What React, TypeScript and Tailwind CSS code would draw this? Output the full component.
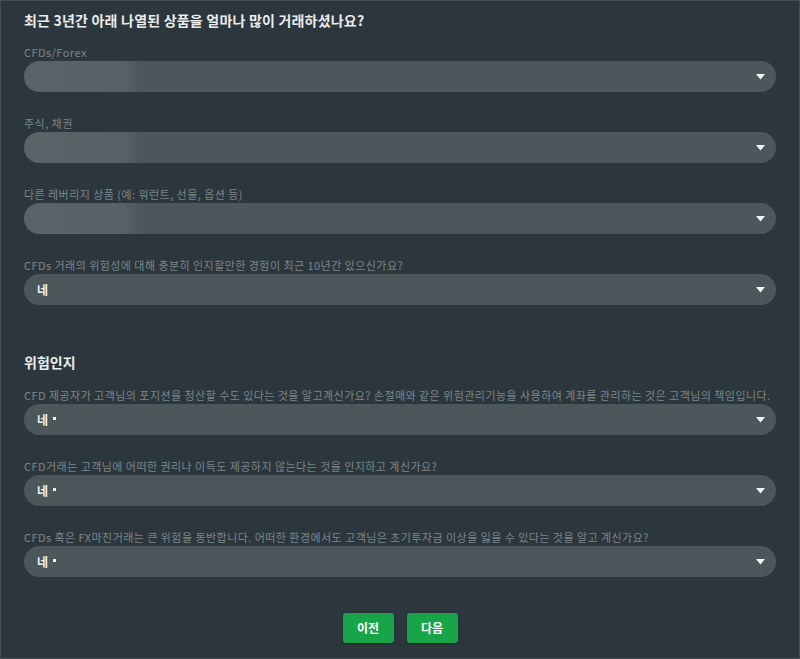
const font = { fontFamily: '"Noto Sans CJK KR", "Noto Sans", sans-serif' };

type Field = { label: string; value?: string; blurred?: boolean; required?: boolean };

const experience: Field[] = [
  { label: "CFDs/Forex", blurred: true },
  { label: "주식, 채권", blurred: true },
  { label: "다른 레버리지 상품 (예: 워런트, 선물, 옵션 등)", blurred: true },
  { label: "CFDs 거래의 위험성에 대해 충분히 인지할만한 경험이 최근 10년간 있으신가요?", value: "네" },
];

const risk: Field[] = [
  {
    label:
      "CFD 제공자가 고객님의 포지션을 청산할 수도 있다는 것을 알고계신가요? 손절매와 같은 위험관리기능을 사용하여 계좌를 관리하는 것은 고객님의 책임입니다.",
    value: "네",
    required: true,
  },
  { label: "CFD거래는 고객님에 어떠한 권리나 이득도 제공하지 않는다는 것을 인지하고 계신가요?", value: "네", required: true },
  {
    label:
      "CFDs 혹은 FX마진거래는 큰 위험을 동반합니다. 어떠한 환경에서도 고객님은 초기투자금 이상을 잃을 수 있다는 것을 알고 계신가요?",
    value: "네",
    required: true,
  },
];

const Caret = () => (
  <svg width="9" height="6" viewBox="0 0 9 6" className="shrink-0">
    <path d="M0 0 H9 L4.5 5.5 Z" fill="#f3f4f5" />
  </svg>
);

const SelectRow = ({ field }: { field: Field }) => (
  <div className="flex flex-col">
    <label className="text-[11px] leading-[14px] tracking-[0.45px] text-[#7b868b] mb-[2px] whitespace-nowrap">
      {field.label}
    </label>
    <div
      className={
        "h-[31px] rounded-[16px] flex items-center pl-[13px] pr-[11px] " +
        (field.blurred
          ? "bg-[linear-gradient(90deg,#5a6367_0,#586165_100px,#4c575c_116px)]"
          : "bg-[#4c575c]")
      }
    >
      <span className="flex-1 flex items-center text-[12px] font-bold text-[#eef0f1]">
        {field.value}
        {field.required && <span className="ml-[5px] mb-[3px] w-[3px] h-[3px] bg-[#eef0f1]" />}
      </span>
      <Caret />
    </div>
  </div>
);

export default function App() {
  return (
    <div style={font} className="w-[800px] h-[659px] bg-[#2c373d] border border-[#474c4f] flex flex-col px-[23px] pt-[9px]">
      <h2 className="text-[14px] leading-[20px] font-bold tracking-[0.2px] text-[#e9ebec]">
        최근 3년간 아래 나열된 상품을 얼마나 많이 거래하셨나요?
      </h2>
      <div className="flex flex-col gap-[24px] mt-[15px]">
        {experience.map((f) => (
          <SelectRow key={f.label} field={f} />
        ))}
      </div>
      <h3 className="mt-[47px] text-[14px] leading-[20px] font-bold text-[#e9ebec]">위험인지</h3>
      <div className="flex flex-col gap-[24px] mt-[16px]">
        {risk.map((f) => (
          <SelectRow key={f.label} field={f} />
        ))}
      </div>
      <div className="flex justify-center gap-[13px] mt-[36px]">
        <button className="w-[51px] h-[30px] rounded-[3px] bg-[#18a449] text-white text-[12px] font-bold shadow-[0_1px_2px_rgba(0,0,0,0.4)]">
          이전
        </button>
        <button className="w-[51px] h-[30px] rounded-[3px] bg-[#18a449] text-white text-[12px] font-bold shadow-[0_1px_2px_rgba(0,0,0,0.4)]">
          다음
        </button>
      </div>
    </div>
  );
}
